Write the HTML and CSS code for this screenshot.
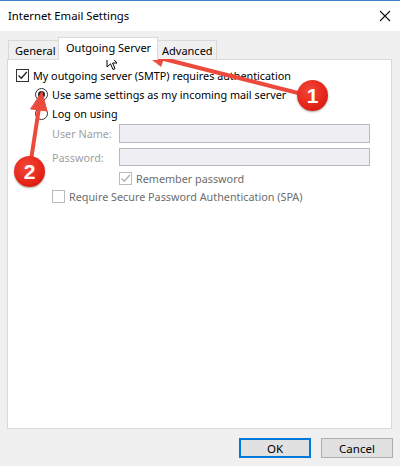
FILE: index.html
```html
<!DOCTYPE html>
<html>
<head>
<meta charset="utf-8">
<link rel="stylesheet" href="styles.css">
</head>
<body>
<div class="window">
  <div class="titlebar">
    <span class="title">Internet Email Settings</span>
    <svg class="close" width="12" height="12" viewBox="0 0 12 12"><path d="M1 1 L11 11 M11 1 L1 11" stroke="#111" stroke-width="1.1" fill="none"/></svg>
  </div>
  <div class="tabs">
    <div class="tab general">General</div>
    <div class="tab active">Outgoing Server</div>
    <div class="tab advanced">Advanced</div>
  </div>
  <div class="panel">
    <div class="row r1">
      <span class="cb checked"><svg width="11" height="11" viewBox="0 0 11 11"><path d="M1.5 5.5 L4.3 8.3 L9.8 2" stroke="#222" stroke-width="1.3" fill="none"/></svg></span>
      <span class="lbl">My outgoing server (SMTP) requires authentication</span>
    </div>
    <div class="row r2">
      <span class="radio on"><span class="dot"></span></span>
      <span class="lbl">Use same settings as my incoming mail server</span>
    </div>
    <div class="row r3">
      <span class="radio"></span>
      <span class="lbl">Log on using</span>
    </div>
    <div class="field f1">
      <span class="flabel">User Name:</span>
      <span class="input"></span>
    </div>
    <div class="field f2">
      <span class="flabel">Password:</span>
      <span class="input"></span>
    </div>
    <div class="row r6">
      <span class="cb disabled"><svg width="11" height="11" viewBox="0 0 11 11"><path d="M1.5 5.5 L4.3 8.3 L9.8 2" stroke="#b0b0b0" stroke-width="1.3" fill="none"/></svg></span>
      <span class="lbl dis">Remember password</span>
    </div>
    <div class="row r7">
      <span class="cb disabled"></span>
      <span class="lbl dis">Require Secure Password Authentication (SPA)</span>
    </div>
  </div>
  <div class="buttons">
    <div class="btn ok">OK</div>
    <div class="btn">Cancel</div>
  </div>

  <svg class="overlay" width="400" height="466" viewBox="0 0 400 466">
    <g fill="#ec4a3c" stroke="#ec4a3c" stroke-linecap="round">
      <line x1="298" y1="93" x2="160" y2="58" stroke-width="4"/>
      <polygon points="144,53 166,50 161,66" stroke-width="1"/>
      <line x1="31" y1="160" x2="39" y2="108" stroke-width="4"/>
      <polygon points="42,92 47,111 31,109" stroke-width="1"/>
    </g>
    <path d="M107 52 L107 67 L110.5 63.8 L113 69.5 L115 68.6 L112.6 63 L117 63 Z" fill="#fff" stroke="#000" stroke-width="1" stroke-linejoin="round"/>
  </svg>
  <div class="badge b1">1</div>
  <div class="badge b2">2</div>
</div>
</body>
</html>
```

FILE: styles.css
```css
* { box-sizing: border-box; }
html, body { margin: 0; padding: 0; }
body {
  background: #f0f0f0;
  font-family: "Noto Sans", "Open Sans", sans-serif;
  font-size: 10.8px;
  color: #000;
}
.window {
  position: relative;
  width: 400px;
  height: 466px;
  overflow: hidden;
  background: #f0f0f0;
}
.titlebar {
  height: 31px;
  background: #fff;
  border-top: 1px solid #3b7fc6;
  display: flex;
  align-items: center;
  justify-content: space-between;
  padding: 0 9px 1px 8px;
}
.title { font-size: 11.3px; }
.close { display: block; }
.tabs {
  display: flex;
  align-items: flex-end;
  height: 28px;
  padding-left: 8px;
  position: relative;
  z-index: 1;
}
.tab {
  height: 19px;
  border: 1px solid #d9d9d9;
  border-bottom: none;
  background: #f0f0f0;
  display: flex;
  align-items: center;
  white-space: nowrap;
  font-size: 11px;
}
.tab.general { width: 50px; padding-left: 6px; border-right: none; }
.tab.active {
  width: 100px;
  height: 23px;
  background: #fff;
  margin-bottom: -1px;
  padding-left: 7px;
  padding-bottom: 4px;
}
.tab.advanced { width: 59px; padding-left: 4px; border-left: none; }
.panel {
  margin: 0 8px 0 7px;
  height: 370px;
  background: #fff;
  border: 1px solid #d9d9d9;
  position: relative;
  padding: 0;
}
.row {
  display: flex;
  align-items: center;
  height: 16px;
}
.r1 { margin: 7px 0 0 8px; }
.r2 { margin: 3px 0 0 27px; }
.r3 { margin: 3px 0 0 27px; }
.r6 { margin: 4px 0 0 111px; }
.r7 { margin: 2px 0 0 44px; }
.cb {
  width: 13px;
  height: 13px;
  border: 1px solid #333;
  background: #fff;
  display: flex;
  align-items: center;
  justify-content: center;
  flex: none;
}
.cb.disabled { border-color: #bcbcbc; }
.radio {
  width: 13px;
  height: 13px;
  border: 1px solid #333;
  border-radius: 50%;
  background: #fff;
  display: flex;
  align-items: center;
  justify-content: center;
  flex: none;
}
.dot {
  width: 7px;
  height: 7px;
  border-radius: 50%;
  background: #222;
}
.lbl { margin-left: 4px; white-space: nowrap; }
.lbl.dis { color: #6d6d6d; }
.field {
  display: flex;
  align-items: center;
  height: 19px;
  margin-left: 44px;
}
.f1 { margin-top: 3px; }
.f2 { margin-top: 5px; height: 18px; }
.flabel {
  width: 67px;
  color: #a0a0a0;
  white-space: nowrap;
}
.input {
  width: 251px;
  height: 100%;
  background: #efeff3;
  border: 1px solid #b5b9c2;
}
.buttons {
  display: flex;
  justify-content: flex-end;
  gap: 10px;
  padding: 9px 7px 0 0;
}
.btn {
  width: 72px;
  height: 20px;
  border: 1px solid #adadad;
  background: #e1e1e1;
  display: flex;
  align-items: center;
  justify-content: center;
  font-size: 11.5px;
}
.btn.ok {
  border: 2px solid #0078d7;
  background: #e1e1e1;
}
.overlay {
  position: absolute;
  left: 0;
  top: 0;
  pointer-events: none;
}
.badge {
  position: absolute;
  width: 31px;
  height: 31px;
  border-radius: 50%;
  background: radial-gradient(circle at 40% 35%, #f4473a 0%, #e42418 60%, #c5150c 100%);
  box-shadow: 0 1px 2px rgba(0,0,0,0.35);
  color: #fff;
  font-family: "Liberation Sans", sans-serif;
  font-weight: bold;
  font-size: 21px;
  display: flex;
  align-items: center;
  justify-content: center;
}
.b1 { left: 297px; top: 80px; }
.b2 { left: 14px; top: 156px; }
```
